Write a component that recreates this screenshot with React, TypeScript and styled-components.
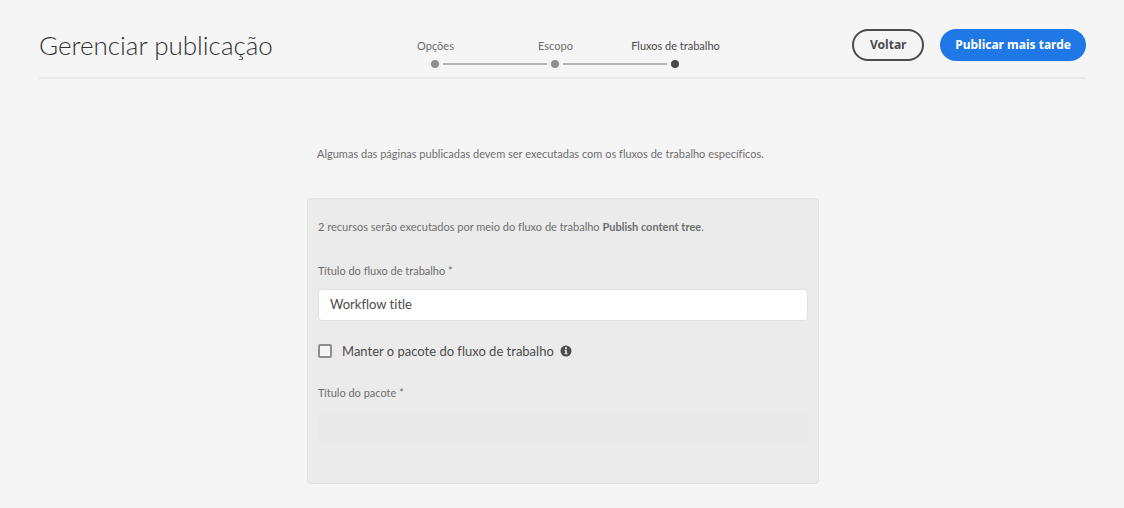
import React from "react";
import styled, { createGlobalStyle } from "styled-components";

const GlobalStyle = createGlobalStyle`
  *, *::before, *::after { box-sizing: border-box; }
  body {
    margin: 0;
    background: #f5f5f5;
    color: #4b4b4b;
    font-family: Lato, sans-serif;
    font-size: 11px;
    font-variant-ligatures: none;
    line-height: 16px;
  }
  button, input { font: inherit; font-variant-ligatures: none; color: inherit; }
`;

const Header = styled.header`
  display: grid;
  grid-template-columns: 24fr 360px 25fr;
  align-items: start;
  height: 79px;
  margin: 0 38px 0 39px;
  border-bottom: 2px solid #eaeaea;
`;

const Title = styled.h1`
  margin: 0;
  padding-top: 27px;
  font-size: 26px;
  font-weight: 300;
  line-height: 36px;
  color: #323232;
  white-space: nowrap;
`;

const Steps = styled.ol`
  display: grid;
  grid-template-columns: repeat(3, 1fr);
  margin: 0;
  padding: 38px 0 0;
  list-style: none;
`;

const Step = styled.li<{ $current?: boolean }>`
  display: flex;
  flex-direction: column;
  align-items: center;
  gap: 6px;
  white-space: nowrap;
  color: ${(p) => (p.$current ? "#4b4b4b" : "#6e6e6e")};
`;

const Track = styled.span<{ $before?: boolean; $after?: boolean }>`
  display: grid;
  grid-template-columns: 1fr 8px 1fr;
  column-gap: 4px;
  align-items: center;
  align-self: stretch;
  &::before, &::after {
    content: "";
    height: 2px;
  }
  &::before {
    background: ${(p) => (p.$before ? "#b3b3b3" : "transparent")};
  }
  &::after {
    background: ${(p) => (p.$after ? "#b3b3b3" : "transparent")};
  }
`;

const Dot = styled.span<{ $current?: boolean }>`
  width: 8px;
  height: 8px;
  border-radius: 50%;
  background: ${(p) => (p.$current ? "#4b4b4b" : "#8e8e8e")};
`;

const Actions = styled.div`
  display: flex;
  justify-content: flex-end;
  gap: 16px;
  padding-top: 29px;
`;

const Button = styled.button<{ $primary?: boolean }>`
  min-width: 72px;
  height: 32px;
  padding: 0 13px;
  border: 2px solid ${(p) => (p.$primary ? "#1f78e6" : "#4b4b4b")};
  border-radius: 16px;
  background: ${(p) => (p.$primary ? "#1f78e6" : "transparent")};
  color: ${(p) => (p.$primary ? "#ffffff" : "#4b4b4b")};
  font-family: "Noto Sans", sans-serif;
  font-size: 12px;
  font-weight: 700;
  line-height: 20px;
  white-space: nowrap;
  cursor: pointer;
`;

const Main = styled.main`
  padding: 67px 38px 24px 40px;
  color: #6e6e6e;
`;

const Column = styled.div`
  max-width: 512px;
  margin: 0 auto;
`;

const Intro = styled.p`
  margin: 0 0 36px;
  padding-left: 10px;
`;

const Panel = styled.section`
  padding: 20px 10px 40px;
  border: 1px solid #e1e1e1;
  border-radius: 4px;
  background: #ebebeb;
`;

const Summary = styled.p`
  margin: 0 0 28px;
`;

const Label = styled.label`
  display: block;
  margin-bottom: 10px;
`;

const TextField = styled.input`
  display: block;
  width: 100%;
  height: 32px;
  padding: 0 11px 2px;
  border: 1px solid #e1e1e1;
  border-radius: 4px;
  background: #ffffff;
  color: #4b4b4b;
  font-size: 13px;
  outline: none;
  &:disabled {
    border-color: #e9e9e9;
    background: #e9e9e9;
  }
`;

const CheckRow = styled.div`
  display: flex;
  align-items: center;
  margin: 20px 0 24px;
  color: #4b4b4b;
  font-size: 13px;
  line-height: 20px;
`;

const Checkbox = styled.input`
  appearance: none;
  width: 14px;
  height: 14px;
  margin: 0 10px 0 0;
  border: 2px solid #8e8e8e;
  border-radius: 2px;
  background: #f5f5f5;
  &:checked { background: #4b4b4b; }
`;

const InfoIcon = styled.svg`
  margin-left: 6px;
`;

export default function App() {
  return (
    <>
      <GlobalStyle />
      <Header>
        <Title>Gerenciar publicação</Title>
        <Steps>
          <Step>
            Opções
            <Track $after><Dot /></Track>
          </Step>
          <Step>
            Escopo
            <Track $before $after><Dot /></Track>
          </Step>
          <Step $current aria-current="step">
            Fluxos de trabalho
            <Track $before><Dot $current /></Track>
          </Step>
        </Steps>
        <Actions>
          <Button type="button">Voltar</Button>
          <Button type="button" $primary>Publicar mais tarde</Button>
        </Actions>
      </Header>
      <Main>
        <Column>
          <Intro>Algumas das páginas publicadas devem ser executadas com os fluxos de trabalho específicos.</Intro>
          <Panel>
            <Summary>
              2 recursos serão executados por meio do fluxo de trabalho <strong>Publish content tree</strong>.
            </Summary>
            <Label htmlFor="workflow-title">Título do fluxo de trabalho *</Label>
            <TextField id="workflow-title" type="text" defaultValue="Workflow title" />
            <CheckRow>
              <Checkbox id="keep-package" type="checkbox" />
              <label htmlFor="keep-package">Manter o pacote do fluxo de trabalho</label>
              <InfoIcon width="12" height="12" viewBox="0 0 12 12" aria-hidden="true">
                <circle cx="6" cy="6" r="5.5" fill="#4b4b4b" />
                <circle cx="6" cy="3.2" r="1.1" fill="#ebebeb" />
                <path d="M4.5 5h2.3v3.2h.8v1H4.4v-1h.8V6h-.7z" fill="#ebebeb" />
              </InfoIcon>
            </CheckRow>
            <Label htmlFor="package-title">Título do pacote *</Label>
            <TextField id="package-title" type="text" disabled />
          </Panel>
        </Column>
      </Main>
    </>
  );
}
